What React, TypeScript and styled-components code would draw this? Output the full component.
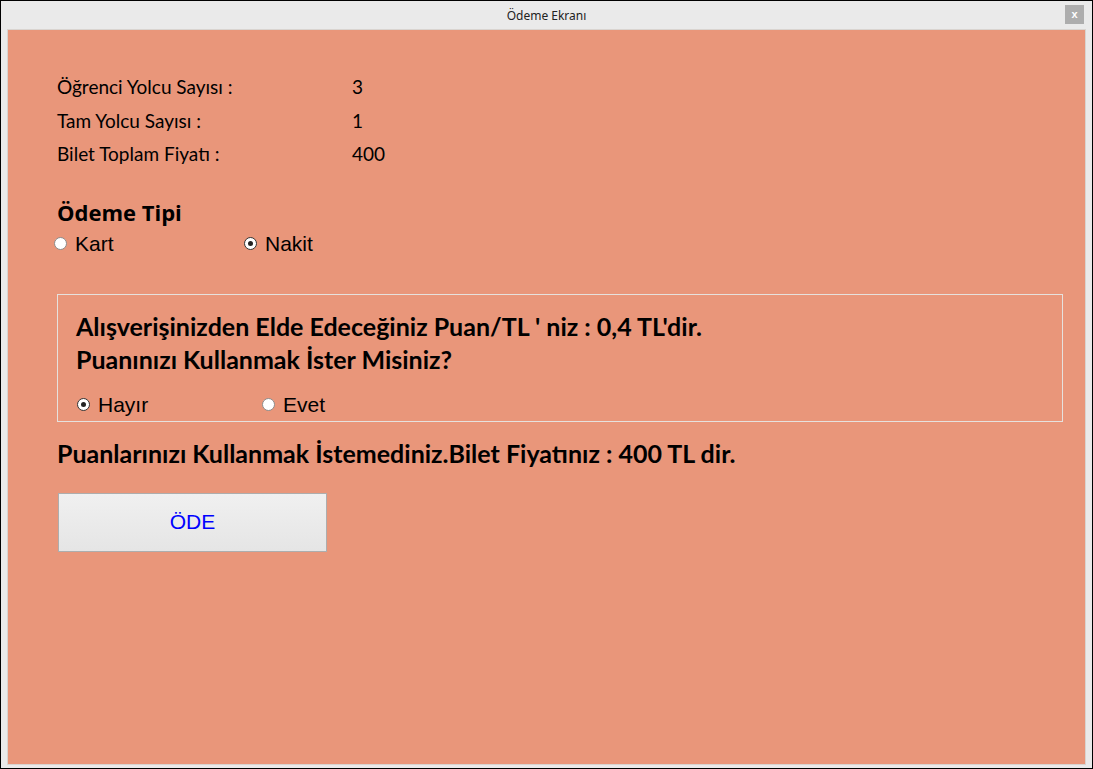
import React, { FC, useState } from "react";
import styled, { createGlobalStyle } from "styled-components";

const GlobalStyle = createGlobalStyle`
  html, body {
    margin: 0;
    padding: 0;
    background: #eaeaea;
  }
  * {
    box-sizing: border-box;
  }
`;

const Window = styled.div`
  width: 1093px;
  height: 769px;
  border: 1px solid #000;
  background: #eaeaea;
  display: flex;
  flex-direction: column;
`;

const TitleBar = styled.div`
  height: 28px;
  flex: none;
  display: flex;
  align-items: center;
  justify-content: center;
  position: relative;
  font-family: "Noto Sans", "Open Sans", sans-serif;
  font-size: 12px;
  color: #222;
`;

const CloseButton = styled.div`
  position: absolute;
  right: 8px;
  top: 4px;
  width: 19px;
  height: 19px;
  background: #adadad;
  color: #fff;
  font-family: "Liberation Sans", sans-serif;
  font-size: 11px;
  font-weight: bold;
  display: flex;
  align-items: center;
  justify-content: center;
  line-height: 1;
`;

const Frame = styled.div`
  flex: 1;
  padding: 0 6px 3px 6px;
  display: flex;
`;

const Panel = styled.div`
  flex: 1;
  background: #e9967a;
  border: 1px solid #d9d4d0;
  padding: 40px 0 0 49px;
  display: flex;
  flex-direction: column;
  align-items: flex-start;
`;

const InfoGrid = styled.div`
  display: grid;
  grid-template-columns: 295px auto;
  grid-auto-rows: 33.5px;
  align-items: center;
  font-family: Lato, "Open Sans", sans-serif;
  font-size: 19px;
  color: #000;
`;

const Heading = styled.div`
  margin-top: 27px;
  font-family: "Open Sans", "Noto Sans", sans-serif;
  font-weight: bold;
  font-size: 22px;
  line-height: 28px;
  color: #000;
`;

const RadioRow = styled.div<{ $indent: number; $step: number; $top: number }>`
  display: grid;
  grid-template-columns: ${(p) => p.$step}px auto;
  margin-left: ${(p) => p.$indent}px;
  margin-top: ${(p) => p.$top}px;
  height: 24px;
  align-items: center;
`;

const Option = styled.label`
  display: flex;
  align-items: center;
  gap: 8px;
  font-family: "Liberation Sans", Arial, sans-serif;
  font-size: 21px;
  color: #000;
  cursor: pointer;
`;

const Circle = styled.span<{ $checked: boolean }>`
  width: 13px;
  height: 13px;
  border-radius: 50%;
  background: #fff;
  border: 1px solid ${(p) => (p.$checked ? "#333" : "#8c8c8c")};
  display: flex;
  align-items: center;
  justify-content: center;
  &::after {
    content: "";
    width: 5px;
    height: 5px;
    border-radius: 50%;
    background: ${(p) => (p.$checked ? "#222" : "transparent")};
  }
`;

const GroupBox = styled.div`
  margin-top: 38px;
  width: 1006px;
  height: 128px;
  border: 1px solid #e6e1dd;
  padding: 15px 0 0 18px;
`;

const BoldLine = styled.div`
  font-family: Lato, "Open Sans", sans-serif;
  font-weight: bold;
  font-size: 25px;
  line-height: 33px;
  color: #000;
`;

const Result = styled(BoldLine)`
  margin-top: 16px;
  line-height: 30px;
`;

const PayButton = styled.button`
  margin-top: 25px;
  margin-left: 1px;
  width: 269px;
  height: 59px;
  border: 1px solid #adadad;
  background: linear-gradient(#f0f0f0, #e5e5e5);
  color: #0000ff;
  font-family: "Liberation Sans", Arial, sans-serif;
  font-size: 21px;
  cursor: pointer;
`;

interface IRadioProps {
  label: string;
  checked: boolean;
  onSelect: () => void;
}

const Radio: FC<IRadioProps> = ({ label, checked, onSelect }) => (
  <Option onClick={onSelect}>
    <Circle $checked={checked} />
    {label}
  </Option>
);

const App: FC = () => {
  const [payType, setPayType] = useState("nakit");
  const [usePoints, setUsePoints] = useState(false);

  return (
    <>
      <GlobalStyle />
      <Window>
        <TitleBar>
          Ödeme Ekranı
          <CloseButton>x</CloseButton>
        </TitleBar>
        <Frame>
          <Panel>
            <InfoGrid>
              <span>Öğrenci Yolcu Sayısı :</span>
              <span>3</span>
              <span>Tam Yolcu Sayısı :</span>
              <span>1</span>
              <span>Bilet Toplam Fiyatı :</span>
              <span>400</span>
            </InfoGrid>

            <Heading>Ödeme Tipi</Heading>
            <RadioRow $indent={-3} $step={190} $top={6}>
              <Radio label="Kart" checked={payType === "kart"} onSelect={() => setPayType("kart")} />
              <Radio label="Nakit" checked={payType === "nakit"} onSelect={() => setPayType("nakit")} />
            </RadioRow>

            <GroupBox>
              <BoldLine>Alışverişinizden Elde Edeceğiniz Puan/TL ' niz : 0,4 TL'dir.</BoldLine>
              <BoldLine>Puanınızı Kullanmak İster Misiniz?</BoldLine>
              <RadioRow $indent={1} $step={185} $top={17}>
                <Radio label="Hayır" checked={!usePoints} onSelect={() => setUsePoints(false)} />
                <Radio label="Evet" checked={usePoints} onSelect={() => setUsePoints(true)} />
              </RadioRow>
            </GroupBox>

            <Result>
              Puanlarınızı Kullanmak İstemediniz.Bilet Fiyatınız : {usePoints ? "399,6" : "400"} TL dir.
            </Result>

            <PayButton>ÖDE</PayButton>
          </Panel>
        </Frame>
      </Window>
    </>
  );
};

export default App;
